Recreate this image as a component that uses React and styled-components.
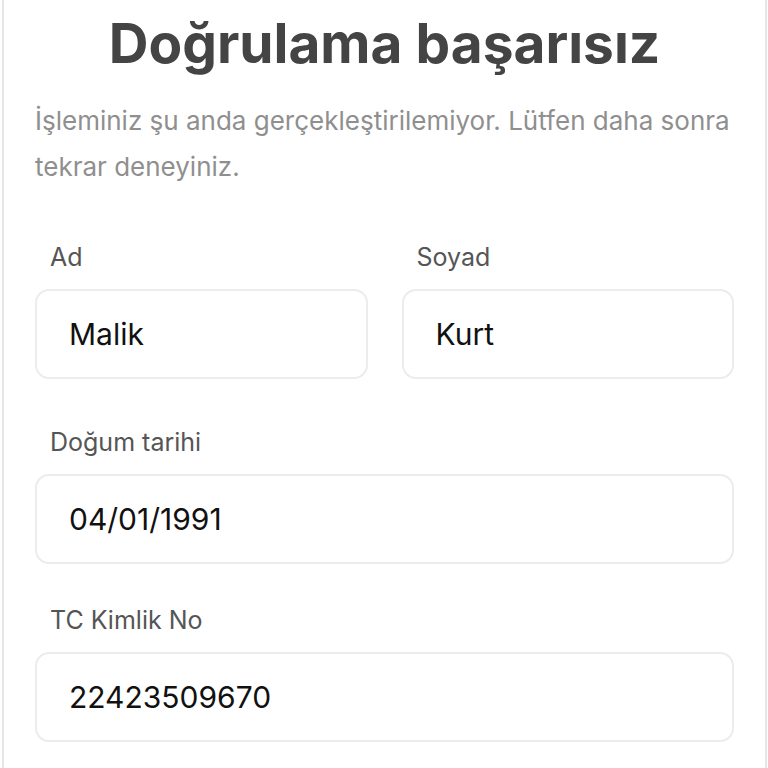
import React from 'react';
import styled, { createGlobalStyle } from 'styled-components';

const GlobalStyle = createGlobalStyle`
  body {
    margin: 0;
    background: #ffffff;
    font-family: Inter, "Noto Sans", sans-serif;
  }
`;

const Card = styled.div`
  margin: 0 1px 0 2px;
  border-left: 2px solid #e6e6e6;
  border-right: 2px solid #e6e6e6;
  padding: 10px 31px 40px 31px;
  min-height: 768px;
  box-sizing: border-box;
`;

const Title = styled.h1`
  margin: 0;
  font-size: 55px;
  line-height: 67px;
  font-weight: 700;
  color: #444444;
  text-align: center;
`;

const Message = styled.p`
  margin: 21px 0 0 0;
  font-size: 26px;
  line-height: 46px;
  color: #8f8f8f;
`;

const Form = styled.form`
  margin-top: 52px;
  display: flex;
  flex-direction: column;
`;

const Row = styled.div`
  display: grid;
  grid-template-columns: ${p => (p.$cols === 2 ? '1fr 1fr' : '1fr')};
  gap: 34px;
  margin-top: ${p => p.$space || 0}px;
`;

const Field = styled.label`
  display: flex;
  flex-direction: column;
  gap: 17px;
`;

const Label = styled.span`
  padding-left: 15px;
  font-size: 25px;
  line-height: 30px;
  color: #555555;
`;

const Input = styled.input`
  height: 90px;
  box-sizing: border-box;
  width: 100%;
  padding: 0 0 0 32px;
  border: 2px solid #ececec;
  border-radius: 14px;
  background: #ffffff;
  font-family: Inter, "Noto Sans", sans-serif;
  font-size: 30px;
  color: #111111;
  outline: none;
`;

const rows = [
  { space: 0, fields: [{ label: 'Ad', value: 'Malik' }, { label: 'Soyad', value: 'Kurt' }] },
  { space: 48, fields: [{ label: 'Doğum tarihi', value: '04/01/1991' }] },
  { space: 41, fields: [{ label: 'TC Kimlik No', value: '22423509670' }] },
];

export default function App() {
  return (
    <>
      <GlobalStyle />
      <Card>
        <Title>Doğrulama başarısız</Title>
        <Message>
          İşleminiz şu anda gerçekleştirilemiyor. Lütfen daha sonra tekrar deneyiniz.
        </Message>
        <Form onSubmit={e => e.preventDefault()}>
          {rows.map((row, i) => (
            <Row key={i} $cols={row.fields.length} $space={row.space}>
              {row.fields.map(f => (
                <Field key={f.label}>
                  <Label>{f.label}</Label>
                  <Input defaultValue={f.value} readOnly />
                </Field>
              ))}
            </Row>
          ))}
        </Form>
      </Card>
    </>
  );
}
